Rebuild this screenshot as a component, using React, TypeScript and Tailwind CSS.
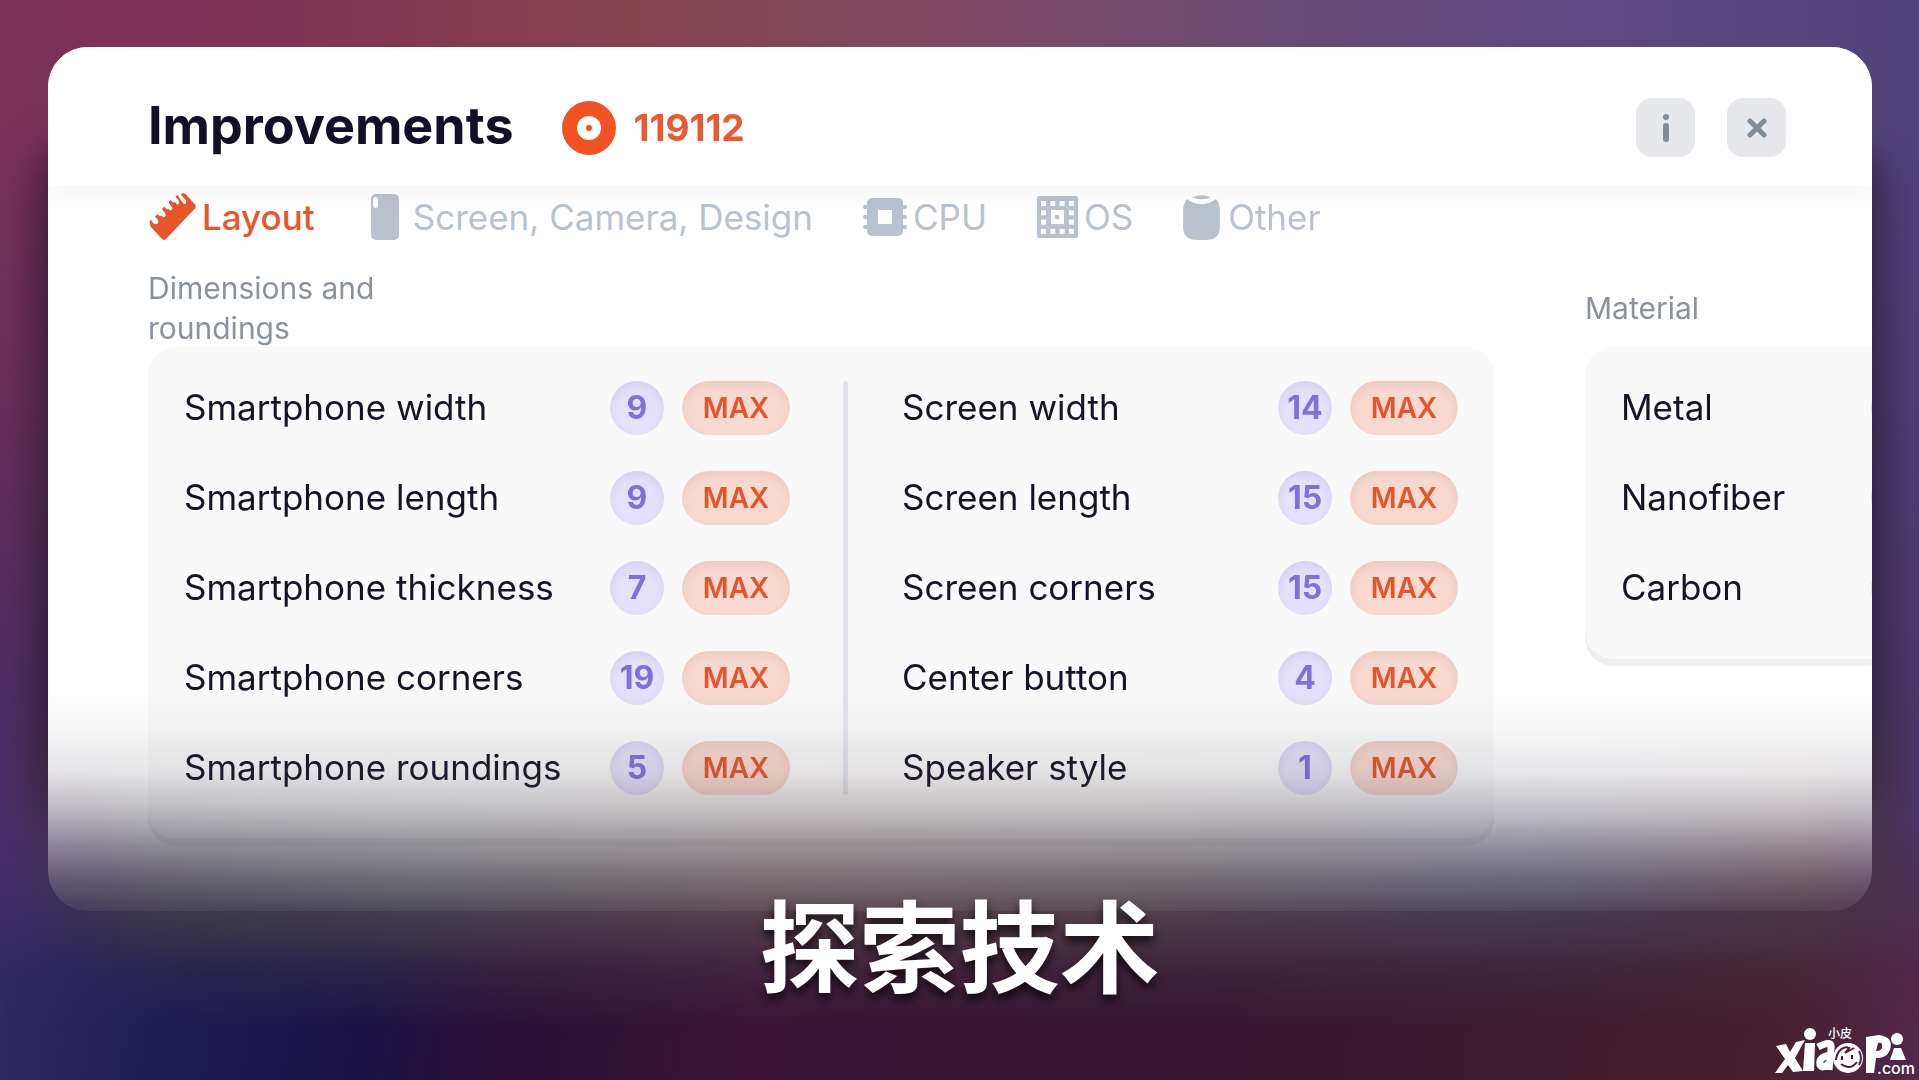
import React from 'react';
import clsx from 'clsx';

interface Upgrade {
  name: string;
  level?: number;
}

interface Tab {
  name: string;
  icon: React.ReactNode;
  spacing: string;
}

const phoneUpgrades: Upgrade[] = [
  { name: 'Smartphone width', level: 9 },
  { name: 'Smartphone length', level: 9 },
  { name: 'Smartphone thickness', level: 7 },
  { name: 'Smartphone corners', level: 19 },
  { name: 'Smartphone roundings', level: 5 },
];

const screenUpgrades: Upgrade[] = [
  { name: 'Screen width', level: 14 },
  { name: 'Screen length', level: 15 },
  { name: 'Screen corners', level: 15 },
  { name: 'Center button', level: 4 },
  { name: 'Speaker style', level: 1 },
];

const materials: Upgrade[] = [{ name: 'Metal' }, { name: 'Nanofiber' }, { name: 'Carbon' }];

function RulerIcon() {
  return (
    <svg width="48" height="48" viewBox="0 0 48 48" fill="currentColor" aria-hidden="true">
      <path d="M2 31Q1 28 3 26.500C4 29 7 33 9.500 30.500C12 28 9 26 7 23.500L9.500 21C10.500 22.500 12 23.500 13.500 22.500L15 24Q18 25 17.500 21C17 19 14.500 17.500 14 16L16.500 13.500C17.500 15 18.500 17 20.500 16L22 17.500Q25 17.500 24 14C23 12 21 11 20.500 9L22.500 7C24 9 25.500 10 27 9L29 11.500Q32 11.500 31 8C30 6 28 5 27.500 3.500L29.500 2C31 4 33 8 36 11Q39 11.500 38 7.500C36.500 5 33.500 3.500 33 1Q35 -.500 37.500 1L47 11.500Q48.500 13.500 47 15.500L18 46Q16 48 14 46L3 34Q2 33 2 31Z" />
    </svg>
  );
}

function PhoneIcon() {
  return (
    <svg width="34" height="46" viewBox="0 0 34 46" aria-hidden="true">
      <rect x="6" width="28" height="46" rx="5" fill="currentColor" />
      <rect x="8" y="3" width="5" height="11" rx="2.5" fill="white" />
    </svg>
  );
}

function CpuIcon() {
  return (
    <svg width="44" height="38" viewBox="0 0 44 38" fill="currentColor" aria-hidden="true">
      <rect y="7" width="44" height="4" rx="2" />
      <rect y="17" width="44" height="4" rx="2" />
      <rect y="27" width="44" height="4" rx="2" />
      <rect x="4" width="36" height="38" rx="5" />
      <rect x="15" y="12" width="14" height="14" fill="white" />
    </svg>
  );
}

function OsIcon() {
  const cells = [0, 1, 2, 3];
  return (
    <svg width="41" height="42" viewBox="0 0 41 42" aria-hidden="true">
      <rect width="41" height="42" rx="2" fill="currentColor" />
      {cells.map((row) =>
        cells.map((col) => (
          <rect
            key={`${row}-${col}`}
            x={4 + col * 9.3}
            y={5 + row * 9.3}
            width="5"
            height="5"
            fill="white"
          />
        )),
      )}
      <rect x="12" y="12" width="17" height="18" fill="currentColor" />
      <rect x="14" y="14" width="13" height="14" fill="white" />
      <rect x="18" y="19" width="4" height="4" fill="currentColor" />
    </svg>
  );
}

function OtherIcon() {
  return (
    <svg width="37" height="45" viewBox="0 0 36 44" fill="currentColor" aria-hidden="true">
      <path d="M4 4Q9 9 18 9Q27 9 32 4Q36 9 36 15V31Q36 44 22 44H14Q0 44 0 31V15Q0 9 4 4Z" />
      <path d="M9 2.500Q18 -2 27 2.500Q18 6 9 2.500Z" />
    </svg>
  );
}

const tabs: Tab[] = [
  { name: 'Layout', icon: <RulerIcon />, spacing: 'gap-1.5' },
  { name: 'Screen, Camera, Design', icon: <PhoneIcon />, spacing: 'gap-3.5' },
  { name: 'CPU', icon: <CpuIcon />, spacing: 'gap-1.5' },
  { name: 'OS', icon: <OsIcon />, spacing: 'gap-1.5' },
  { name: 'Other', icon: <OtherIcon />, spacing: 'gap-2' },
];

function UpgradeList({ items, className }: { items: Upgrade[]; className?: string }) {
  return (
    <ul className={clsx('flex flex-col gap-9', className)}>
      {items.map((item) => (
        <li key={item.name} className="flex h-[54px] items-center">
          <span className="flex-1 whitespace-nowrap pb-0.5 text-[35px] text-[#171327]">
            {item.name}
          </span>
          {item.level && (
            <span className="mr-[18px] flex size-[54px] shrink-0 items-center justify-center rounded-full bg-[#e5e1fa] text-[32px] font-bold text-[#8270d8] shadow-[inset_0_4px_8px_rgba(80,60,130,0.1)]">
              {item.level}
            </span>
          )}
          <button
            aria-label={`Upgrade ${item.name}`}
            className="h-[54px] w-[108px] shrink-0 rounded-full bg-[#f7d9d0] text-[28px] font-semibold text-[#e5552b] shadow-[inset_0_4px_8px_rgba(150,60,40,0.1)]"
          >
            {item.level && 'MAX'}
          </button>
        </li>
      ))}
    </ul>
  );
}

function Watermark() {
  return (
    <div className="absolute right-1 bottom-0 h-14 text-white">
      <svg width="140" height="54" viewBox="0 0 140 54" fill="currentColor" aria-label="xiaopi">
        <path d="M1 22L11 20L15 28L21 18L30 16L20 34L28 47L18 48L13 41L7 49L0 49L10 35Z" />
        <circle cx="35" cy="10" r="6" />
        <path d="M30 19H40L39 47H28Z" />
        <path
          d="M43 23Q58 15 56 25L54 46M55 31Q43 33 45 41Q48 46 55 38"
          fill="none"
          stroke="currentColor"
          strokeWidth="7"
        />
        <circle cx="73" cy="34" r="15" />
        <path
          d="M61 36C62 25 70 22 74 24L70 29L79 24M67 32V36M77 31V35M66 40Q75 47 82 38M84 27Q88 34 84 41"
          fill="none"
          stroke="#48203a"
          strokeWidth="2"
        />
        <path
          d="M91 13L104 11Q119 13 115 26Q111 35 101 34L99 49H91ZM103 19L101 27Q108 27 107 21Q107 18 103 19Z"
          fillRule="evenodd"
        />
        <circle cx="122" cy="15" r="6" />
        <path d="M119 24H126L131 36H115Z" />
      </svg>
      <span className="absolute top-0.5 left-[53px] text-xs leading-4 font-medium">小皮</span>
      <span className="absolute right-0 bottom-0.5 text-base leading-5 font-medium">.com</span>
    </div>
  );
}

export default function App() {
  return (
    <div className="relative flex min-h-screen flex-col overflow-hidden bg-[linear-gradient(90deg,#4a2d68_0%,#40304a_10%,#56303c_50%,#432c4a_90%,#4b3868_100%)] px-[47px] pt-[47px] pl-12 font-['Inter','Noto_Sans_CJK_SC',sans-serif]">
      {/* soft colour clouds behind the card */}
      <div className="absolute inset-x-0 top-0 h-3/4 bg-[linear-gradient(90deg,#7c3257_0%,#7d3254_12%,#85434f_33%,#7d4a62_50%,#6b4a75_66%,#5d4a80_82%,#50437a_100%)] mask-[linear-gradient(#000_0%,#000_15%,transparent_100%)]" />
      <div className="absolute inset-x-0 bottom-0 h-[260px] bg-[linear-gradient(100deg,#352d68_0%,#1e1c50_10%,#1b1444_20%,#2b1038_28%,#3a1335_40%,#36142f_60%,#3d1a2c_80%,#46202e_92%,#53284a_100%)] mask-[linear-gradient(transparent,#000_60%)]" />
      {/* card shadow, kept to the sides */}
      <div className="absolute inset-x-12 top-36 bottom-64 rounded-[40px] bg-[#160c20]/85 blur-[26px]" />
      <div className="absolute inset-x-0 bottom-[50px] h-[350px] bg-[linear-gradient(90deg,transparent_0%,#3f3b4a_8%,#4a4852_22%,#584a50_40%,#524850_60%,#46445a_80%,#4c3844_94%,transparent_100%)] mask-[linear-gradient(transparent,#000_25%,#000_60%,rgba(0,0,0,0.35)_80%,transparent)]" />

      <main className="relative flex h-[864px] flex-col mask-[linear-gradient(#000_0,#000_640px,rgba(0,0,0,0.97)_680px,rgba(0,0,0,0.87)_725px,rgba(0,0,0,0.66)_765px,rgba(0,0,0,0.4)_800px,rgba(0,0,0,0.18)_835px,rgba(0,0,0,0.06)_864px)]">
        <div className="flex flex-1 flex-col overflow-hidden rounded-[40px] bg-white">
          <header className="relative z-10 flex h-[139px] shrink-0 items-center bg-white pt-[22px] pr-[86px] pl-[100px] shadow-[0_4px_30px_rgba(0,0,0,0.06)]">
            <h1 className="pb-1 text-[52px] leading-none font-bold text-[#130f26]">Improvements</h1>
            <svg className="ml-[48px]" width="54" height="54" viewBox="0 0 54 54" aria-hidden="true">
              <circle cx="27" cy="27" r="27" fill="#f15424" />
              <circle cx="27" cy="27" r="12" fill="white" />
              <circle cx="27" cy="27" r="3" fill="#f15424" />
            </svg>
            <span className="ml-[18px] text-[37px] leading-none font-bold text-[#ea5a30]">119112</span>
            <div className="ml-auto flex items-center gap-8">
              <button
                aria-label="Info"
                className="flex size-[59px] items-center justify-center rounded-2xl bg-[#e6e8eb] text-[#818d97]"
              >
                <svg width="8" height="28" viewBox="0 0 8 28" fill="currentColor">
                  <circle cx="4" cy="3" r="3" />
                  <rect x="1" y="9" width="6" height="19" rx="3" />
                </svg>
              </button>
              <button
                aria-label="Close"
                className="flex size-[59px] items-center justify-center rounded-2xl bg-[#e6e8eb] text-[#818d97]"
              >
                <svg
                  width="20"
                  height="20"
                  viewBox="0 0 20 20"
                  stroke="currentColor"
                  strokeWidth="5"
                  strokeLinecap="round"
                >
                  <path d="M3 3L17 17M17 3L3 17" />
                </svg>
              </button>
            </div>
          </header>

          <nav className="flex h-[62px] shrink-0 items-center gap-[50px] pl-[100px]">
            {tabs.map((tab, idx) => (
              <button
                key={tab.name}
                className={clsx(
                  'flex items-center whitespace-nowrap text-[35px]',
                  tab.spacing,
                  idx === 0 ? 'font-medium text-[#e8562b]' : 'text-[#b9c2ce]',
                )}
              >
                {tab.icon}
                {tab.name}
              </button>
            ))}
          </nav>

          <div className="flex items-start gap-[91px] pl-[100px]">
            <section className="w-[1346px] shrink-0">
              <h2 className="flex h-[99px] w-64 items-center pt-5 text-[30px] leading-10 text-[#8a939d]">
                Dimensions and roundings
              </h2>
              <div className="flex rounded-[28px] bg-[#f9f9f9] px-9 pt-[34px] pb-[51px] shadow-[inset_0_-7px_0_#eeeff0]">
                <UpgradeList items={phoneUpgrades} className="w-[606px]" />
                <div className="mr-[54px] ml-[53px] w-[5px] rounded-full bg-[#e1e5ea]" />
                <UpgradeList items={screenUpgrades} className="flex-1" />
              </div>
            </section>
            <section className="w-[430px] shrink-0">
              <h2 className="flex h-[99px] items-center pt-5 text-[30px] leading-10 text-[#8a939d]">
                Material
              </h2>
              <div className="rounded-[28px] bg-[#f9f9f9] px-9 pt-[34px] pb-[51px] shadow-[inset_0_-7px_0_#eeeff0]">
                <UpgradeList items={materials} />
              </div>
            </section>
          </div>
        </div>
      </main>

      <h2 className="absolute inset-x-0 bottom-[66px] text-center font-['Noto_Sans_CJK_SC',sans-serif] text-[100px] leading-[144px] font-bold text-white [text-shadow:0_6px_10px_rgba(0,0,0,0.7)]">
        探索技术
      </h2>
      <Watermark />
    </div>
  );
}
